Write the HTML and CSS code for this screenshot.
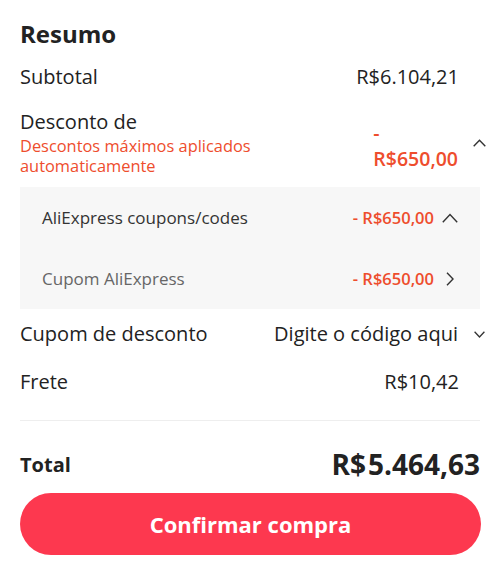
FILE: index.html
```html
<!DOCTYPE html>
<html lang="pt">
<head>
<meta charset="utf-8">
<link rel="stylesheet" href="styles.css">
</head>
<body>
<div class="summary">
  <h1 class="title">Resumo</h1>

  <div class="row row-subtotal">
    <span class="label">Subtotal</span>
    <span class="value plain">R$6.104,21</span>
  </div>

  <div class="row row-discount">
    <div class="disc-left">
      <div class="label disc-label">Desconto de</div>
      <div class="disc-note">Descontos máximos aplicados<br>automaticamente</div>
    </div>
    <div class="right">
      <div class="disc-val"><span>-</span><span>R$650,00</span></div>
      <span class="icon-slot">
        <svg width="13" height="8" viewBox="0 0 13 8"><path d="M0.7 7.3 L6.5 1.2 L12.3 7.3" fill="none" stroke="#333" stroke-width="1.4"/></svg>
      </span>
    </div>
  </div>

  <div class="panel">
    <div class="prow">
      <span class="plabel strong">AliExpress coupons/codes</span>
      <div class="pright">
        <span class="pval">- R$650,00</span>
        <span class="picon">
          <svg width="16" height="10" viewBox="0 0 16 10"><path d="M0.8 9.2 L8 1.6 L15.2 9.2" fill="none" stroke="#333" stroke-width="1.4"/></svg>
        </span>
      </div>
    </div>
    <div class="prow">
      <span class="plabel">Cupom AliExpress</span>
      <div class="pright">
        <span class="pval">- R$650,00</span>
        <span class="picon">
          <svg width="16" height="14" viewBox="0 0 16 14"><path d="M5 0.8 L11 7 L5 13.2" fill="none" stroke="#333" stroke-width="1.4"/></svg>
        </span>
      </div>
    </div>
  </div>

  <div class="row row-coupon">
    <span class="label">Cupom de desconto</span>
    <div class="right">
      <span class="value">Digite o código aqui</span>
      <span class="icon-slot">
        <svg width="11" height="7" viewBox="0 0 11 7"><path d="M0.6 0.8 L5.5 6 L10.4 0.8" fill="none" stroke="#333" stroke-width="1.3"/></svg>
      </span>
    </div>
  </div>

  <div class="row row-frete">
    <span class="label">Frete</span>
    <span class="value plain">R$10,42</span>
  </div>

  <div class="divider"></div>

  <div class="row row-total">
    <span class="total-label">Total</span>
    <span class="total-val"><span class="cur">R$</span>5.464,63</span>
  </div>

  <button class="confirm">Confirmar compra</button>
</div>
</body>
</html>
```
FILE: styles.css
```css
* { box-sizing: border-box; }
html, body { margin: 0; padding: 0; background: #fff; }
body {
  font-family: "Open Sans", "Noto Sans", sans-serif;
  color: #222;
}
.summary {
  width: 500px;
  padding: 18px 20px 0 20px;
}
.title {
  margin: 0;
  font-size: 24px;
  font-weight: 700;
  line-height: 32px;
  color: #222;
}
.row {
  display: flex;
  justify-content: space-between;
  align-items: center;
}
.label {
  font-size: 20px;
  line-height: 26px;
  color: #222;
}
.disc-label {
  line-height: 24px;
  margin-bottom: 2px;
}
.value {
  font-size: 20px;
  line-height: 26px;
  color: #222;
}
.value.plain { margin-right: 21px; }
.right {
  display: flex;
  align-items: center;
}
.icon-slot {
  width: 16px;
  margin-left: 13px;
  margin-right: -7px;
  display: flex;
  justify-content: center;
  align-items: center;
}
.row-subtotal { height: 40px; margin-top: 7px; }
.row-discount {
  padding-top: 13px;
  padding-bottom: 11px;
}
.disc-note {
  font-size: 16.4px;
  line-height: 20px;
  color: #ee4d2d;
}
.disc-val {
  display: flex;
  flex-direction: column;
  align-items: flex-start;
  font-size: 19.5px;
  font-weight: 600;
  line-height: 26px;
  color: #ee4d2d;
  margin-top: 6px;
}
.panel {
  background: #f7f7f7;
  padding: 0 22px;
}
.prow {
  height: 61px;
  display: flex;
  justify-content: space-between;
  align-items: center;
}
.plabel {
  font-size: 17px;
  color: #666;
}
.plabel.strong { color: #333; }
.pright { display: flex; align-items: center; }
.pval {
  font-size: 16.5px;
  font-weight: 600;
  color: #ee4d2d;
}
.picon {
  width: 16px;
  margin-left: 8px;
  display: flex;
  justify-content: center;
  align-items: center;
}
.row-coupon { height: 48px; margin-top: 1px; }
.row-frete { height: 48px; }
.divider {
  height: 1px;
  background: #eee;
  margin-top: 14px;
}
.row-total {
  height: 86px;
}
.total-label {
  font-size: 20px;
  font-weight: 700;
  color: #222;
}
.total-val {
  font-size: 28px;
  font-weight: 700;
  color: #222;
}
.cur { margin-right: 2px; }
.confirm {
  display: block;
  width: 461px;
  height: 62px;
  margin-top: -14px;
  border: none;
  border-radius: 31px;
  background: #fd384f;
  color: #fff;
  font-family: "Open Sans", "Noto Sans", sans-serif;
  font-size: 22px;
  font-weight: 700;
}
```
